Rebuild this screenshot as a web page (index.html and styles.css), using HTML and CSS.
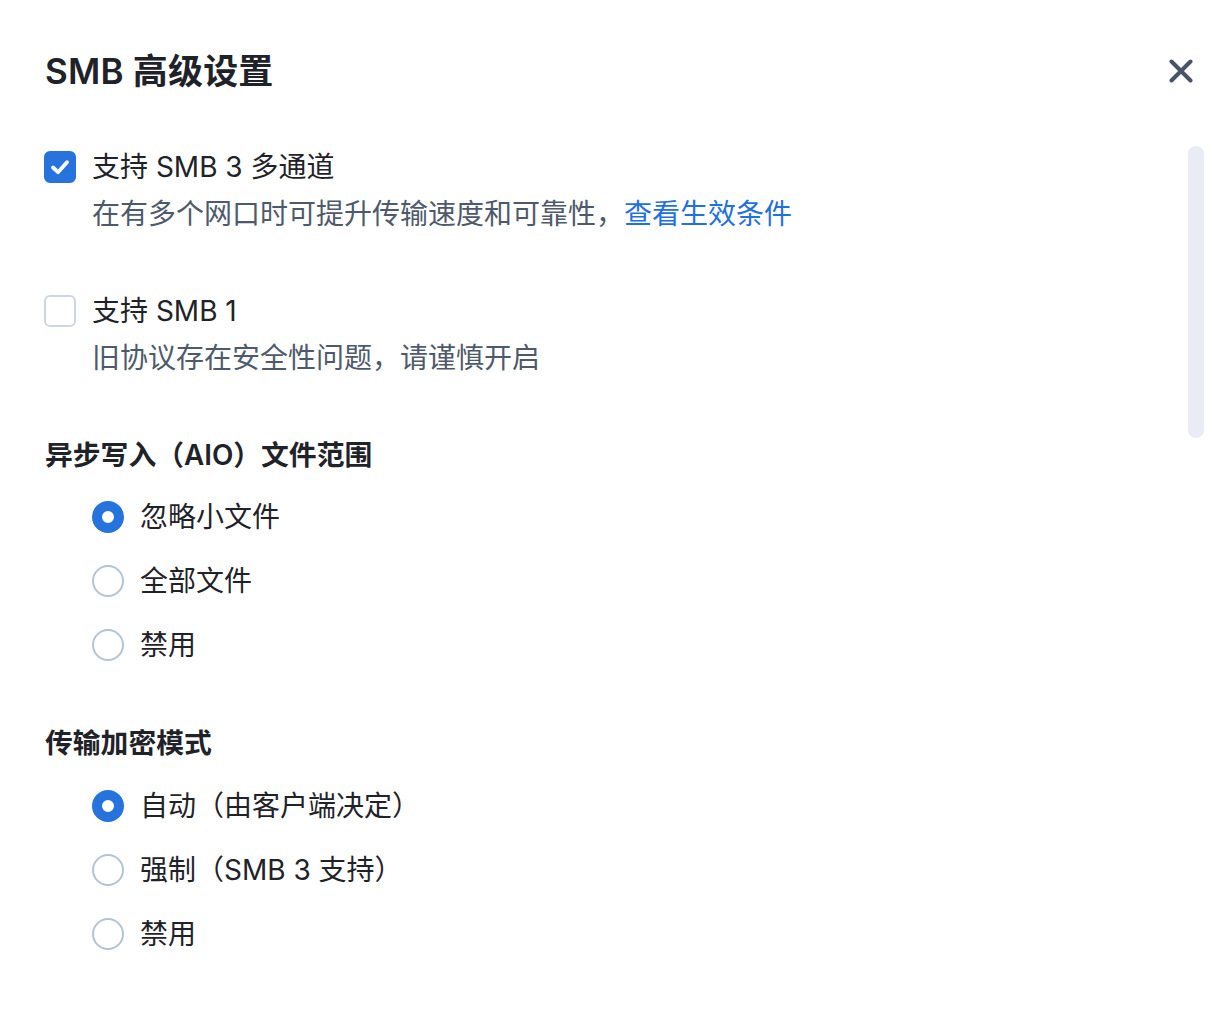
FILE: index.html
```html
<!DOCTYPE html>
<html lang="zh-CN">
<head>
<meta charset="utf-8">
<title>SMB 高级设置</title>
<link rel="stylesheet" href="styles.css">
</head>
<body>
<div class="dialog">
  <div class="header">
    <h1 class="title">SMB 高级设置</h1>
    <button class="close" aria-label="关闭">
      <svg width="24" height="24" viewBox="0 0 24 24"><path d="M2.5 2.5 L21.5 21.5 M21.5 2.5 L2.5 21.5" stroke="#475467" stroke-width="4" stroke-linecap="round" fill="none"/></svg>
    </button>
  </div>
  <div class="body">
    <div class="option">
      <label class="check-row">
        <span class="checkbox checked">
          <svg width="32" height="32" viewBox="0 0 32 32"><path d="M9 16.5 L14 21.2 L23 11.2" stroke="#fff" stroke-width="3.8" stroke-linecap="round" stroke-linejoin="round" fill="none"/></svg>
        </span>
        <span class="label">支持 SMB 3 多通道</span>
      </label>
      <div class="desc">在有多个网口时可提升传输速度和可靠性，<a class="link" href="#">查看生效条件</a></div>
    </div>
    <div class="option">
      <label class="check-row">
        <span class="checkbox"></span>
        <span class="label">支持 SMB 1</span>
      </label>
      <div class="desc">旧协议存在安全性问题，请谨慎开启</div>
    </div>

    <div class="section first">
      <div class="section-title">异步写入（AIO）文件范围</div>
      <div class="radio-group">
        <div class="radio-row"><span class="radio checked"></span><span class="label">忽略小文件</span></div>
        <div class="radio-row"><span class="radio"></span><span class="label">全部文件</span></div>
        <div class="radio-row"><span class="radio"></span><span class="label">禁用</span></div>
      </div>
    </div>

    <div class="section">
      <div class="section-title">传输加密模式</div>
      <div class="radio-group">
        <div class="radio-row"><span class="radio checked"></span><span class="label">自动（由客户端决定）</span></div>
        <div class="radio-row"><span class="radio"></span><span class="label">强制（SMB 3 支持）</span></div>
        <div class="radio-row"><span class="radio"></span><span class="label">禁用</span></div>
      </div>
    </div>
    <div class="scroll-thumb"></div>
  </div>
</div>
</body>
</html>
```

FILE: styles.css
```css
html, body {
  margin: 0;
  padding: 0;
  background: #ffffff;
}
body {
  font-family: "Inter", "Noto Sans CJK SC", sans-serif;
  color: #1f2329;
  width: 1214px;
  height: 1026px;
  overflow: hidden;
}
.dialog {
  position: relative;
}
.header {
  height: 142px;
  display: flex;
  align-items: center;
  justify-content: space-between;
  padding: 0 21px 0 45px;
}
.title {
  margin: 0;
  font-size: 35px;
  font-weight: 600;
  line-height: 48px;
  color: #1f2329;
  letter-spacing: 0.2px;
}
.close {
  border: 0;
  background: none;
  padding: 0;
  width: 24px;
  height: 24px;
  display: flex;
  cursor: pointer;
}
.body {
  position: relative;
  padding-left: 44px;
}
.option {
  margin-bottom: 48px;
}
.option + .option {
  margin-bottom: 49px;
}
.check-row {
  display: flex;
  align-items: center;
  height: 48px;
  gap: 16px;
  padding-top: 1px;
}
.label {
  font-size: 28px;
  line-height: 48px;
  color: #1f2329;
}
.checkbox {
  width: 32px;
  height: 32px;
  box-sizing: border-box;
  border: 2px solid #cdd6e2;
  border-radius: 6px;
  display: flex;
  align-items: center;
  justify-content: center;
  flex: none;
  position: relative;
}
.checkbox.checked {
  background: #2673dd;
  border-color: #2673dd;
}
.checkbox svg {
  position: absolute;
  left: -2px;
  top: -2px;
}
.desc {
  padding-left: 48px;
  font-size: 28px;
  line-height: 47px;
  color: #4e5a6b;
}
.link {
  color: #1f70e0;
  text-decoration: none;
}
.section-title {
  font-size: 27.8px;
  font-weight: 600;
  line-height: 48px;
  color: #1f2329;
  padding-left: 1px;
}
.section + .section {
  margin-top: 42px;
}
.radio-group {
  padding-left: 48px;
  padding-top: 6px;
}
.section + .section .radio-group {
  padding-top: 7px;
}
.radio-row {
  display: flex;
  align-items: center;
  height: 64px;
  gap: 16px;
}
.radio {
  width: 32px;
  height: 32px;
  box-sizing: border-box;
  border: 2px solid #b5c3d5;
  border-radius: 50%;
  flex: none;
}
.radio.checked {
  border: 10px solid #2673dd;
  background: #fff;
}
.scroll-thumb {
  position: absolute;
  left: 1188px;
  top: 4px;
  width: 16px;
  height: 292px;
  border-radius: 8px;
  background: #e9ecf4;
}
```
